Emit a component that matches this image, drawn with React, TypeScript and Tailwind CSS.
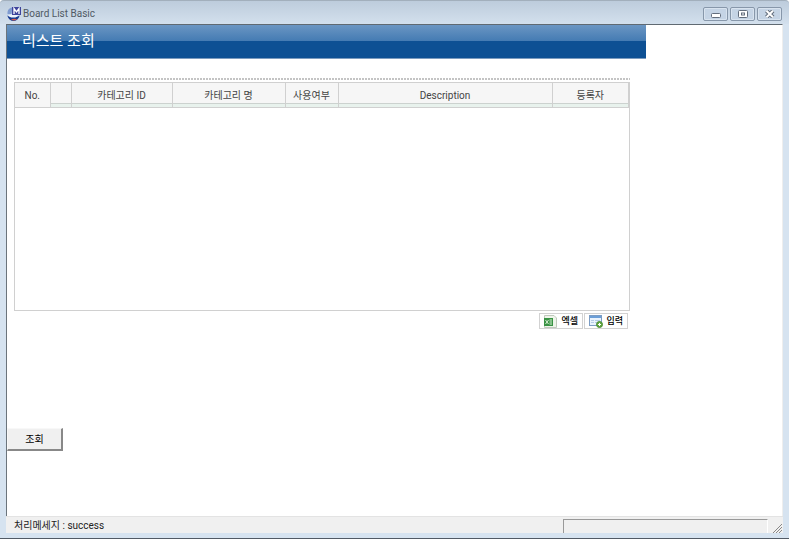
import type { ReactNode } from "react";

const columns = [
  { label: "카테고리 ID", width: "w-[101px]" },
  { label: "카테고리 명", width: "w-[113px]" },
  { label: "사용여부", width: "w-[53px]" },
  { label: "Description", width: "w-[214px]" },
];

function AppIcon() {
  return (
    <svg width="14" height="14" viewBox="0 0 14 14" aria-hidden="true">
      <circle cx="6.5" cy="7" r="6.5" fill="#c3d3ea" />
      <path d="M0.5 5C1 2 3 .6 5.500 .5L4.500 7L.5 7Z" fill="#7f9bd0" />
      <path d="M.3 8.500C3 10.500 9 10.500 12.700 8.500C11.500 12.400 9 14 6.500 14S1.300 12.200 .3 8.500Z" fill="#173a8f" />
      <path d="M1 8.500Q6 6 11.500 8.500L8.500 10.500H4Z" fill="#edf3fb" />
      <path d="M4 12.500Q7 11 10.500 12.300Q7 14.500 4 12.500Z" fill="#d95b48" />
      <rect x="5" y="0" width="9" height="8" fill="#3e449c" />
      <path d="M7 7V1.500L9.500 5L12 1.500V7" fill="none" stroke="#fff" strokeWidth="1.300" />
    </svg>
  );
}

function WindowButton({ label, children }: { label: string; children: ReactNode }) {
  return (
    <button
      type="button"
      aria-label={label}
      className="flex h-[14px] w-[25px] items-center justify-center rounded-[2px] border border-[#8797aa] bg-[#c5d4e5] shadow-[inset_0_0_0_1px_#d8e3ef]"
    >
      <svg width="11" height="8" viewBox="0 0 11 8" aria-hidden="true">
        {children}
      </svg>
    </button>
  );
}

function ExcelIcon() {
  return (
    <svg width="13" height="13" viewBox="0 0 13 13" aria-hidden="true">
      <path d="M.5 .5H10L12.500 3V12.500H.5Z" fill="#eef4ea" stroke="#c0c9bc" />
      <rect x="0" y="3" width="9" height="8" fill="#399344" />
      <path d="M1.500 5L4.500 9M4.500 5L1.500 9M5.500 9H8M5.500 7H8M5.500 5H8" stroke="#d8efd3" fill="none" />
    </svg>
  );
}

function InputIcon() {
  return (
    <svg width="14" height="13" viewBox="0 0 14 13" aria-hidden="true">
      <rect x=".5" y=".5" width="12" height="10" fill="#eaf3fd" stroke="#7c9dc4" />
      <rect x="1" y="1" width="11" height="2" fill="#6c9fd8" />
      <path d="M2 5.500H5M6 5.500H11M2 7.500H5M6 7.500H9" stroke="#b4cce6" />
      <circle cx="10.500" cy="9.500" r="3" fill="#62a940" stroke="#4d8d38" />
      <path d="M9 9.500H12M10.500 8V11" stroke="#fff" />
    </svg>
  );
}

export default function App() {
  return (
    <div className="flex min-h-screen flex-col rounded-t-[4px] border-b border-[#515a65] bg-[#d6e3f0] font-[Roboto,'Noto_Sans_CJK_KR',sans-serif] text-[10px] text-[#222]">
      <header className="flex h-6 items-center justify-between rounded-t-[4px] border-t border-[#a2afbc] bg-linear-to-b from-[#bdccdc] to-[#d3e0ed] px-[7px] pt-[3px]">
        <h1 className="flex items-center gap-[2px] text-[10px] leading-4 text-[#505a64]">
          <AppIcon />
          Board List Basic
        </h1>
        <div className="flex gap-[2px]">
          <WindowButton label="Minimize">
            <rect x="1.500" y="3.500" width="9" height="4" rx="1" fill="#fff" stroke="#626d7c" />
          </WindowButton>
          <WindowButton label="Maximize">
            <rect x="1.500" y=".5" width="9" height="7" rx="1" fill="#fff" stroke="#626d7c" />
            <rect x="4.500" y="3" width="3" height="2" fill="#fff" stroke="#626d7c" />
          </WindowButton>
          <WindowButton label="Close">
            <path d="M2.500 .8L9 7.200M9 .8L2.500 7.200" stroke="#626d7c" strokeWidth="4" />
            <path d="M2.500 .8L9 7.200M9 .8L2.500 7.200" stroke="#fff" strokeWidth="2" />
          </WindowButton>
        </div>
      </header>

      <main className="mx-[6px] flex grow flex-col border-t border-r border-l border-t-[#606a72] border-r-[#eeeeee] border-l-[#6b747c] bg-white">
        <h2 className="h-[34px] w-full max-w-[639px] border-b border-[#7b9bbf] bg-[linear-gradient(#6b96c3_0,#447bb3_16px,#0d5094_16px,#0d5094_100%)] pl-[15px] text-[15px] leading-[32px] text-white">
          리스트 조회
        </h2>

        <section className="mt-[19px] ml-[7px] w-full max-w-[616px]">
          <div className="h-[2px] bg-[repeating-linear-gradient(90deg,#c4c4c4_0_2px,#ffffff_2px_3px)]" />
          <div className="mt-[2px] h-[229px] border border-[#d0d0d0]">
            <table className="h-[25px] w-full table-fixed border-collapse bg-[#f6f6f6] text-[#444]">
              <thead>
                <tr>
                  <th scope="col" className="w-[35px] border-r border-b border-[#d0d0d0] p-0 font-normal">
                    No.
                  </th>
                  <th scope="col" aria-label="선택" className="w-[21px] border-r border-b border-[#d0d0d0] p-0">
                    <div className="mt-[20px] h-[4px] border-t border-[#ccd2cf] bg-[#e8f2ed]" />
                  </th>
                  {columns.map((column) => (
                    <th
                      key={column.label}
                      scope="col"
                      className={`${column.width} border-r border-b border-[#d0d0d0] p-0 font-normal`}
                    >
                      <div className="h-[20px] pt-[5px] leading-4">{column.label}</div>
                      <div className="h-[4px] border-t border-[#ccd2cf] bg-[#e8f2ed]" />
                    </th>
                  ))}
                  <th scope="col" className="border-r border-b border-[#d0d0d0] p-0 font-normal">
                    <div className="h-[20px] pt-[5px] leading-4">등록자</div>
                    <div className="h-[4px] border-t border-[#ccd2cf] bg-[#e8f2ed]" />
                  </th>
                </tr>
              </thead>
            </table>
          </div>
          <div className="mt-[2px] mr-[2px] flex justify-end gap-[1px]">
            <button
              type="button"
              className="flex h-4 w-[44px] items-center justify-between border border-[#d2d2d2] bg-white px-1 text-[9px] leading-3 font-medium text-black"
            >
              <ExcelIcon />
              엑셀
            </button>
            <button
              type="button"
              className="flex h-4 w-[44px] items-center justify-between border border-[#d2d2d2] bg-white px-1 text-[9px] leading-3 font-medium text-black"
            >
              <InputIcon />
              입력
            </button>
          </div>
        </section>

        <button
          type="button"
          className="mt-[99px] h-[23px] w-[56px] border-t border-r-2 border-b-2 border-l border-t-[#f8f8f8] border-r-[#888] border-b-[#888] border-l-[#f8f8f8] bg-[#f0f0f0] pt-[2px] leading-4 text-black"
        >
          조회
        </button>
      </main>

      <footer className="mx-[6px] mb-[5px] flex h-[17px] items-end justify-between border-t border-[#e3e3e3] bg-[#f0f0f0] pl-2">
        <output className="leading-[14px]">처리메세지 : success</output>
        <div className="flex items-end gap-[5px]">
          <div className="h-[14px] w-[205px] border-t border-r border-l border-t-[#999] border-r-white border-l-[#999]" />
          <svg width="10" height="10" viewBox="0 0 10 10" aria-hidden="true">
            <path d="M0 10L9 1M3 10L9 4M6 10L9 7" stroke="#888" />
          </svg>
        </div>
      </footer>
    </div>
  );
}
